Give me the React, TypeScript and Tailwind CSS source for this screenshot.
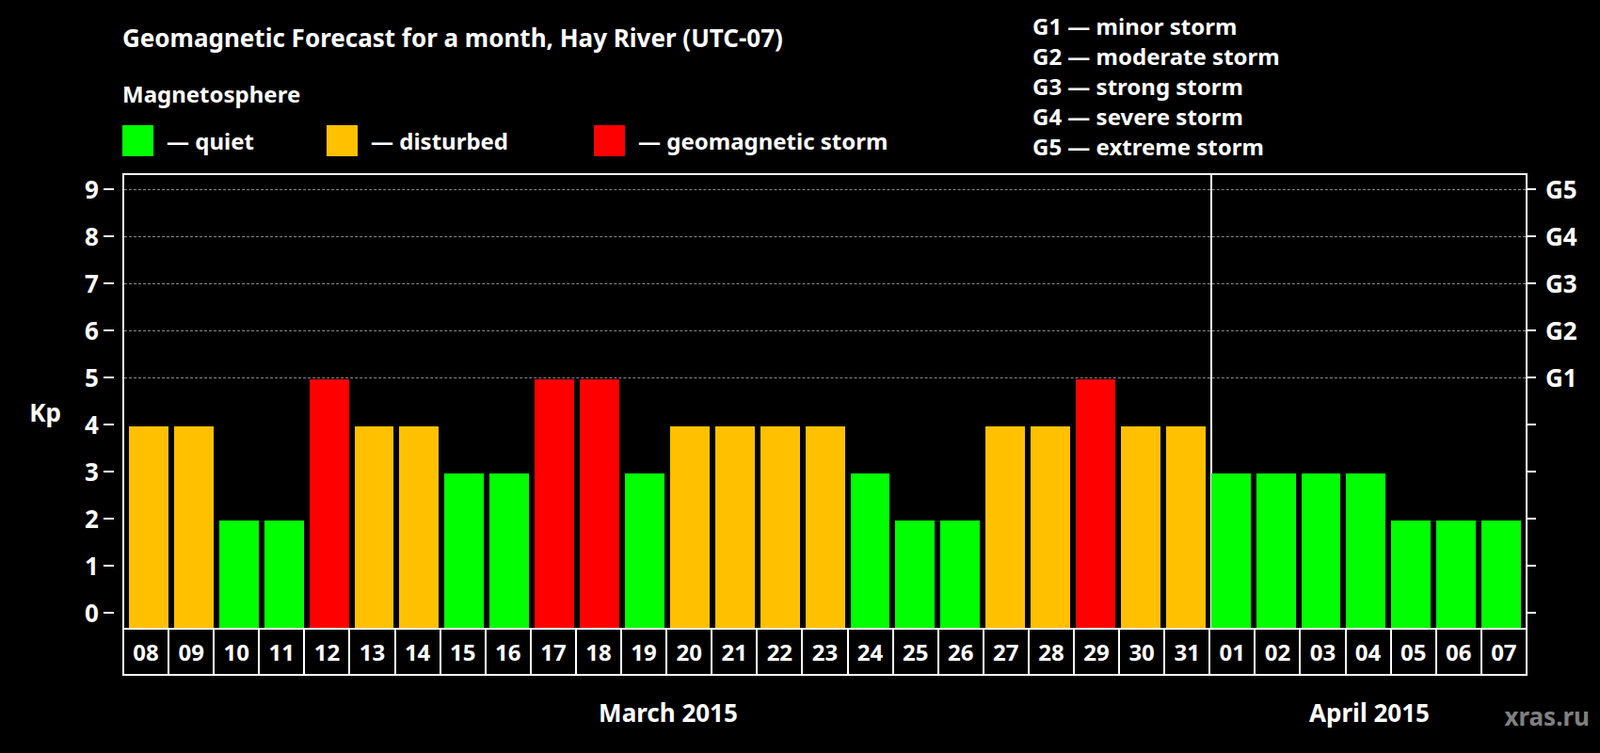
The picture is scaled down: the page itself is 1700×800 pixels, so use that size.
import React from 'react';

const days: [string, number][] = [
  ['08', 4], ['09', 4], ['10', 2], ['11', 2], ['12', 5], ['13', 4], ['14', 4], ['15', 3],
  ['16', 3], ['17', 5], ['18', 5], ['19', 3], ['20', 4], ['21', 4], ['22', 4], ['23', 4],
  ['24', 3], ['25', 2], ['26', 2], ['27', 4], ['28', 4], ['29', 5], ['30', 4], ['31', 4],
  ['01', 3], ['02', 3], ['03', 3], ['04', 3], ['05', 2], ['06', 2], ['07', 2],
];

const barColor = (kp: number) => (kp >= 5 ? 'bg-[#ff0000]' : kp === 4 ? 'bg-[#ffc000]' : 'bg-[#00ff00]');
const levels = [9, 8, 7, 6, 5, 4, 3, 2, 1, 0];
const gLabel: Record<number, string> = { 9: 'G5', 8: 'G4', 7: 'G3', 6: 'G2', 5: 'G1' };

const App: React.FC = () => {
  return (
    <div className="w-[1700px] h-[800px] bg-black text-white font-bold font-['Liberation_Sans',Arial,sans-serif] overflow-hidden">
      {/* Header */}
      <div className="h-[184px] flex">
        <div className="w-[1097px] pl-[130px] pt-[25px]">
          <div className="text-[26px] leading-[30px]">Geomagnetic Forecast for a month, Hay River (UTC-07)</div>
          <div className="text-[24px] leading-[30px] mt-[30px]">Magnetosphere</div>
          <div className="flex items-center mt-[18px] text-[24px] leading-[33px]">
            <div className="w-[33px] h-[33px] bg-[#00ff00]" />
            <span className="ml-[14px] w-[170px]">— quiet</span>
            <div className="w-[33px] h-[33px] bg-[#ffc000]" />
            <span className="ml-[14px] w-[237px]">— disturbed</span>
            <div className="w-[33px] h-[33px] bg-[#ff0000]" />
            <span className="ml-[14px]">— geomagnetic storm</span>
          </div>
        </div>
        <div className="pt-[12px] text-[24px] leading-[32px]">
          <div>G1 — minor storm</div>
          <div>G2 — moderate storm</div>
          <div>G3 — strong storm</div>
          <div>G4 — severe storm</div>
          <div>G5 — extreme storm</div>
        </div>
      </div>

      {/* Chart */}
      <div className="flex">
        {/* Left axis */}
        <div className="w-[130px] flex">
          <div className="w-[90px] flex items-center justify-center text-[26px] pl-[6px]">
            <span className="mt-[-80px]">Kp</span>
          </div>
          <div className="flex flex-col mt-[-8px]">
            {levels.map((k) => (
              <div key={k} className="h-[50px] flex items-center justify-end text-[26px]">
                <span className="mr-[5px]">{k}</span>
                <div className="w-[11px] h-[2px] bg-white" />
              </div>
            ))}
          </div>
        </div>

        {/* Plot */}
        <div className="w-[1493px]">
          <div className="relative h-[485px] border-2 border-white flex items-end px-[2px]">
            {levels.filter((k) => k >= 5).map((k) => (
              <div
                key={k}
                className="absolute left-0 right-0 border-t border-dashed border-[#888]"
                style={{ top: 465 - 50 * k - 0.5 }}
              />
            ))}
            <div className="absolute top-0 bottom-0 left-[1154px] w-[2px] bg-white" />
            {days.map(([d, kp], i) => (
              <div key={i} className="flex-1 px-[3px] relative">
                <div className={barColor(kp)} style={{ height: 14 + 50 * kp }} />
              </div>
            ))}
          </div>
          <div className="flex h-[49px] border-2 border-t-0 border-white">
            {days.map(([d], i) => (
              <div
                key={i}
                className={`flex-1 flex items-center justify-center text-[24px] ${i > 0 ? 'border-l-2 border-white' : ''}`}
              >
                {d}
              </div>
            ))}
          </div>
          <div className="flex text-[26px] mt-[24px] leading-[30px]">
            <div className="w-[1160px] text-center pr-[0px]">March 2015</div>
            <div className="w-[330px] text-center">April 2015</div>
          </div>
        </div>

        {/* Right axis */}
        <div className="flex flex-col mt-[-8px]">
          {levels.map((k) => (
            <div key={k} className="h-[50px] flex items-center text-[26px]">
              <div className="w-[9px] h-[2px] bg-white" />
              <span className="ml-[10px]">{gLabel[k] ?? ''}</span>
            </div>
          ))}
        </div>
      </div>
      <div className="flex justify-end pr-[11px] mt-[-26px] text-[26px] text-[#808080] leading-[30px]">xras.ru</div>
    </div>
  );
};

export default App;
